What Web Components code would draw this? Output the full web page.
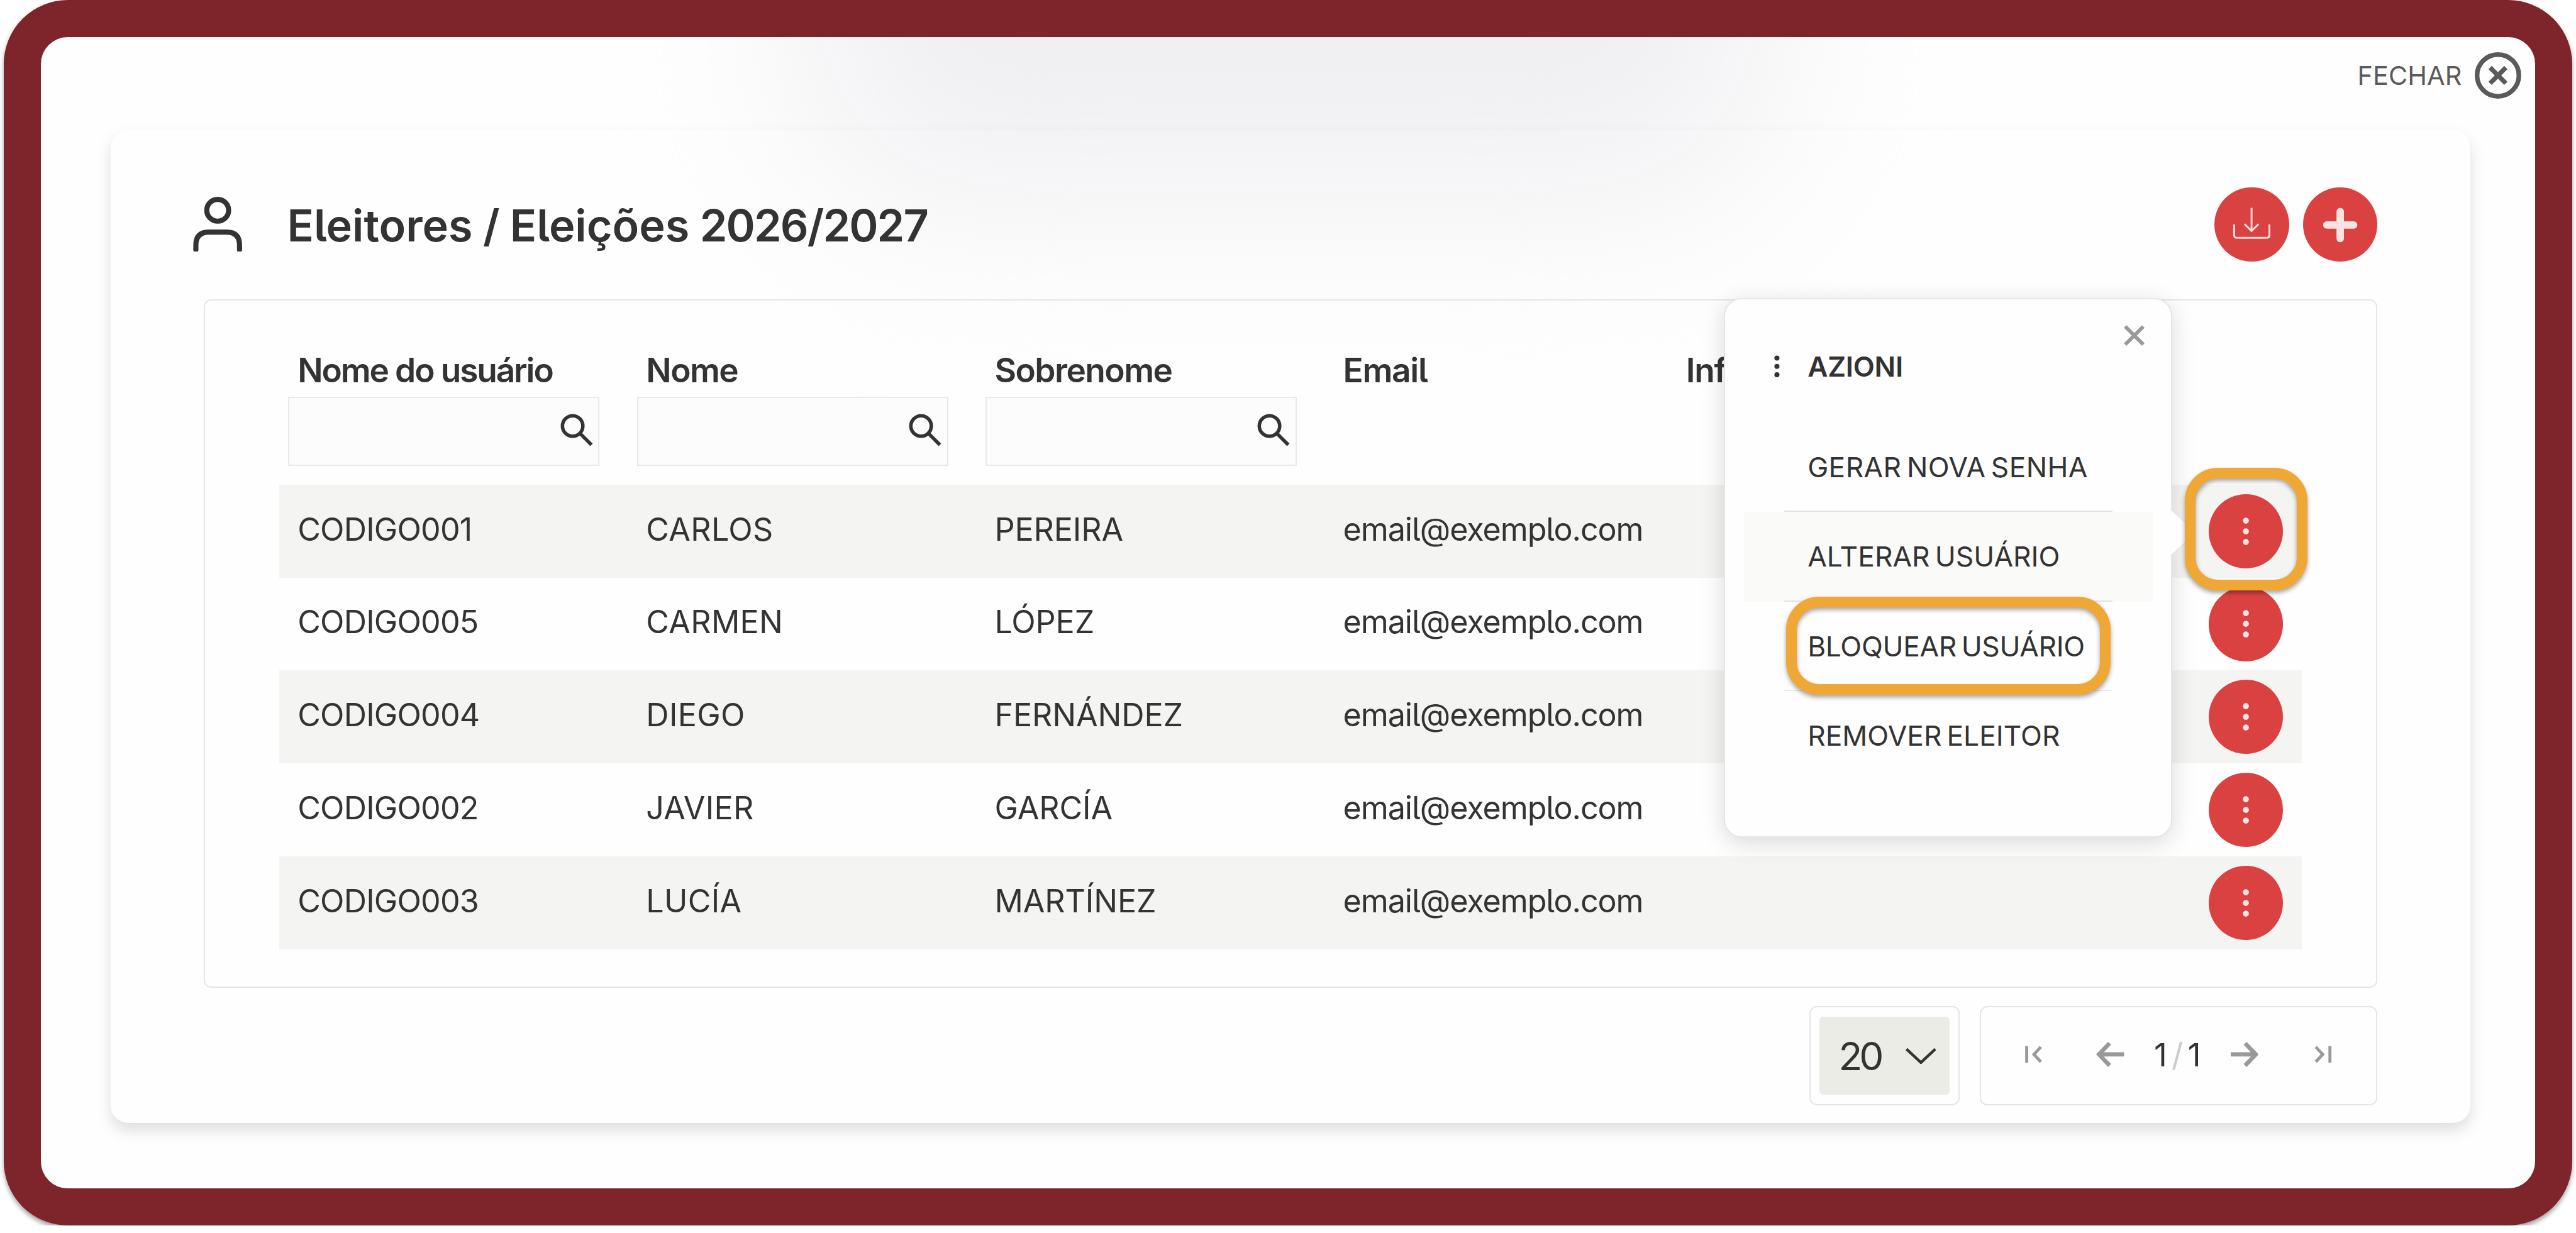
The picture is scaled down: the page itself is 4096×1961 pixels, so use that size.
<!DOCTYPE html>
<html lang="pt">
<head>
<meta charset="utf-8">
<title>Eleitores</title>
<style>
  /* 1rem = 100 design units, the design is 5544 units wide */
  html {
    font-size: calc(100vw / 55.44);
    background: #fff;
  }
  body {
    margin: 0;
    overflow: hidden;
    color: #333;
    font-family: Inter, 'Liberation Sans', Arial, sans-serif;
    font-feature-settings: 'cv05';
  }
</style>
</head>
<body>
<modal-frame>
  <voter-card heading="Eleitores / Eleições" period="2026/2027">
    <voter-table></voter-table>
    <table-pager size="20" page="1" total="1"></table-pager>
  </voter-card>
</modal-frame>

<script>
class BaseElement extends HTMLElement {
  constructor() {
    super();
    this.attachShadow({ mode: 'open' });
  }

  connectedCallback() {
    this.shadowRoot.innerHTML = this.render();
  }
}

class ModalFrame extends BaseElement {
  render() {
    return `
      <style>
        :host {
          display: block;
          box-sizing: border-box;
          position: relative;
          height: 26.38rem;
          margin: 0 0.08rem;
          border: 0.8rem solid #7e242b;
          border-radius: 1.38rem;
          background: #fefefe;
          box-shadow: 0 0.06rem 0.1rem rgba(0,0,0,0.35);
        }
        .glow {
          position: absolute;
          inset: 0;
          overflow: hidden;
          border-radius: 0.58rem;
        }
        .glow::before {
          content: '';
          position: absolute;
          left: 50%;
          top: -5rem;
          width: 20.4rem;
          height: 8.3rem;
          margin-left: -10.2rem;
          border-radius: 2.5rem;
          background: #efeff2;
          filter: blur(1.95rem);
        }
        .close {
          display: flex;
          position: relative;
          align-items: center;
          justify-content: flex-end;
          gap: 0.28rem;
          height: 1.65rem;
          margin-bottom: 0.35rem;
          padding-right: 0.3rem;
          color: #5a5a5a;
          font-size: 0.56rem;
          letter-spacing: 0.002em;
        }
        .close svg {
          width: 1rem;
          height: 1rem;
        }
        ::slotted(*) {
          margin: 0 1.4rem 0 1.5rem;
        }
      </style>
      <div class="glow"></div>
      <div class="close">
        <span>FECHAR</span>
        <svg viewBox="0 0 100 100" fill="none" stroke="#5a5a5a" stroke-width="10">
          <circle cx="50" cy="50" r="45"/>
          <path d="M33 33L67 67M67 33L33 67"/>
        </svg>
      </div>
      <slot></slot>
    `;
  }
}

class RoundButton extends BaseElement {
  static icons = {
    download: '<path d="M80 44V94M65 79L80 94L95 79M42.500 80V103Q42.500 108.500 48 108.500H113Q118.500 108.500 118.500 103V80" fill="none" stroke="#fae0e0" stroke-width="4"/>',
    plus: '<path d="M80 52V110M51 81H109" fill="none" stroke="#fae3e3" stroke-width="16" stroke-linecap="round"/>',
    dots: '<g fill="#fae3e3"><circle cx="80" cy="57" r="6.500"/><circle cx="80" cy="80" r="6.500"/><circle cx="80" cy="103" r="6.500"/></g>'
  };

  render() {
    return `
      <style>
        :host {
          display: block;
          flex: none;
          position: relative;
          width: 1.6rem;
          height: 1.6rem;
          border-radius: 50%;
          background: #da4141;
        }
        svg {
          display: block;
          width: 100%;
          height: 100%;
        }
      </style>
      <svg viewBox="0 0 160 160">${RoundButton.icons[this.getAttribute('icon')]}</svg>
      <slot></slot>
    `;
  }
}

/* outline drawn over its parent, offsets come from --ring-inset */
class FocusRing extends BaseElement {
  render() {
    return `
      <style>
        :host {
          display: block;
          box-sizing: border-box;
          position: absolute;
          inset: var(--ring-inset, 0);
          z-index: 3;
          border: 0.24rem solid #efa835;
          border-radius: 0.71rem;
          filter: drop-shadow(0 0.06rem 0.05rem rgba(0,0,0,0.35));
        }
      </style>
    `;
  }
}

class VoterCard extends BaseElement {
  render() {
    return `
      <style>
        :host {
          display: block;
          box-sizing: border-box;
          position: relative;
          height: 21.38rem;
          padding: 0.42rem 2rem 0 2.01rem;
          border-radius: 0.38rem;
          box-shadow: 0 0.16rem 0.32rem rgba(0,0,0,0.13);
        }
        header {
          display: flex;
          align-items: center;
          height: 3.22rem;
        }
        .user {
          width: 1.06rem;
          height: 1.18rem;
          margin-left: -0.24rem;
        }
        h1 {
          flex: 1;
          margin: 0.06rem 0 0 0.97rem;
          font-size: 0.95rem;
          font-weight: 600;
          word-spacing: -0.02em;
        }
        h1 span {
          letter-spacing: -0.027em;
        }
        .buttons {
          display: flex;
          gap: 0.3rem;
        }
      </style>
      <header>
        <svg class="user" viewBox="0 0 106 118" fill="none" stroke="#333" stroke-width="11">
          <circle cx="53" cy="29" r="23.500"/>
          <path d="M6 114V104Q6 76 34 76H72Q100 76 100 104V114" stroke-linecap="round"/>
        </svg>
        <h1>${this.getAttribute('heading')} <span>${this.getAttribute('period')}</span></h1>
        <div class="buttons">
          <round-button icon="download"></round-button>
          <round-button icon="plus"></round-button>
        </div>
      </header>
      <slot></slot>
    `;
  }
}

class SearchBox extends BaseElement {
  render() {
    return `
      <style>
        :host {
          display: flex;
          box-sizing: border-box;
          align-items: center;
          justify-content: flex-end;
          width: 6.7rem;
          height: 1.5rem;
          margin-left: 0.19rem;
          padding: 0 0.12rem 0.06rem 0;
          border: 0.03rem solid #e9e9e9;
          background: #fcfcfc;
        }
        svg {
          width: 0.7rem;
          height: 0.7rem;
        }
      </style>
      <svg viewBox="0 0 70 70" fill="none" stroke="#333" stroke-width="7.500">
        <circle cx="26.500" cy="26.500" r="22"/>
        <path d="M42.500 42.500L67 67"/>
      </svg>
    `;
  }
}

class VoterTable extends BaseElement {
  columns = [
    { label: 'Nome do usuário', search: true, spacing: -0.04 },
    { label: 'Nome', search: true, spacing: -0.03 },
    { label: 'Sobrenome', search: true, spacing: -0.029 },
    { label: 'Email', spacing: -0.024 },
    { label: 'Inf', spacing: -0.024 }
  ];

  rows = [
    ['CODIGO001', 'CARLOS', 'PEREIRA', 'email@exemplo.com'],
    ['CODIGO005', 'CARMEN', 'LÓPEZ', 'email@exemplo.com'],
    ['CODIGO004', 'DIEGO', 'FERNÁNDEZ', 'email@exemplo.com'],
    ['CODIGO002', 'JAVIER', 'GARCÍA', 'email@exemplo.com'],
    ['CODIGO003', 'LUCÍA', 'MARTÍNEZ', 'email@exemplo.com']
  ];

  render() {
    const head = this.columns.map(c => `
      <div>
        <div class="label" style="letter-spacing:${c.spacing}em">${c.label}</div>
        ${c.search ? '<search-box></search-box>' : ''}
      </div>`).join('');

    const body = this.rows.map((row, i) => `
      <div class="row${i % 2 ? '' : ' shaded'}">
        ${row.map(cell => `<span>${cell}</span>`).join('')}
        <round-button icon="dots">${i === 0 ? '<focus-ring></focus-ring>' : ''}</round-button>
      </div>`).join('');

    return `
      <style>
        :host {
          display: block;
          box-sizing: border-box;
          position: relative;
          height: 14.82rem;
          padding: 0 1.6rem;
          border: 0.03rem solid #e6e6e6;
          border-radius: 0.16rem;
        }
        .head, .row {
          display: grid;
          grid-template-columns: 7.5rem 7.5rem 7.5rem 7.38rem 1fr;
        }
        .head {
          box-sizing: border-box;
          height: 3.97rem;
          padding-top: 0.94rem;
        }
        .label {
          padding-left: 0.39rem;
          line-height: 1.13rem;
          font-size: 0.72rem;
          font-weight: 600;
        }
        .row {
          align-items: center;
          height: 2rem;
          font-size: 0.68rem;
        }
        .row.shaded {
          background: #f4f4f2;
        }
        .row span {
          padding: 0 0 0.1rem 0.39rem;
          letter-spacing: 0.006em;
        }
        .row span:first-child {
          letter-spacing: -0.016em;
        }
        .row span:nth-child(3) {
          letter-spacing: -0.002em;
        }
        .row span:nth-child(4) {
          letter-spacing: -0.021em;
        }
        .row round-button {
          justify-self: end;
          margin-right: 0.4rem;
        }
        focus-ring {
          --ring-inset: -0.56rem -0.53rem -0.47rem -0.51rem;
        }
        action-menu {
          position: absolute;
          left: 32.69rem;
          top: -0.05rem;
          z-index: 2;
        }
      </style>
      <div class="head">${head}</div>
      ${body}
      <action-menu></action-menu>
    `;
  }
}

class ActionMenu extends BaseElement {
  render() {
    return `
      <style>
        :host {
          display: block;
          box-sizing: border-box;
          width: 9.65rem;
          height: 11.61rem;
          padding: 0 0.4rem;
          border: 0.03rem solid #e6e6e6;
          border-radius: 0.38rem;
          background: #fefefe;
          box-shadow: 0 0.12rem 0.5rem rgba(0,0,0,0.14);
          font-size: 0.6rem;
          word-spacing: -0.1em;
        }
        .arrow {
          position: absolute;
          left: 100%;
          top: 4.52rem;
          width: 0.54rem;
          height: 1rem;
        }
        .x {
          position: absolute;
          right: 0.57rem;
          top: 0.56rem;
          width: 0.45rem;
          height: 0.45rem;
        }
        .title {
          display: flex;
          align-items: center;
          height: 1rem;
          padding: 0.95rem 0 0.7rem 0.65rem;
          font-weight: 600;
          letter-spacing: -0.006em;
        }
        .title svg {
          width: 0.12rem;
          height: 0.48rem;
          margin-right: 0.6rem;
        }
        .item {
          position: relative;
          height: 1.93rem;
          padding-left: 1.37rem;
          line-height: 1.94rem;
        }
        .item.active {
          background: #fafaf8;
        }
        .item:not(:last-child)::after {
          content: '';
          position: absolute;
          left: 0.87rem;
          right: 0.87rem;
          bottom: 0;
          height: 0.025rem;
          background: #e3e3e3;
        }
        focus-ring {
          --ring-inset: -0.11rem 0.9rem -0.08rem 0.91rem;
        }
      </style>
      <svg class="arrow" viewBox="0 0 54 100">
        <path d="M0 1L54 50L0 99" fill="#fefefe" stroke="#e9e9e9" stroke-width="2"/>
      </svg>
      <svg class="x" viewBox="0 0 45 45" fill="none" stroke="#999" stroke-width="8">
        <path d="M3 3L42 42M42 3L3 42"/>
      </svg>
      <div class="title">
        <svg viewBox="0 0 12 48" fill="#333">
          <circle cx="6" cy="6" r="5.500"/><circle cx="6" cy="24" r="5.500"/><circle cx="6" cy="42" r="5.500"/>
        </svg>
        AZIONI
      </div>
      <div class="item" style="letter-spacing:0.009em">GERAR NOVA SENHA</div>
      <div class="item active" style="letter-spacing:0.001em">ALTERAR USUÁRIO</div>
      <div class="item" style="letter-spacing:-0.007em">BLOQUEAR USUÁRIO<focus-ring></focus-ring></div>
      <div class="item">REMOVER ELEITOR</div>
    `;
  }
}

class TablePager extends BaseElement {
  render() {
    return `
      <style>
        :host {
          display: flex;
          justify-content: flex-end;
          gap: 0.42rem;
          padding-top: 0.405rem;
        }
        .size, .pages {
          display: flex;
          box-sizing: border-box;
          align-items: center;
          height: 2.13rem;
          border: 0.03rem solid #e6e6e6;
          border-radius: 0.16rem;
        }
        .size {
          width: 3.24rem;
          padding: 0 0.19rem;
        }
        .select {
          display: flex;
          box-sizing: border-box;
          flex: 1;
          align-items: center;
          justify-content: space-between;
          height: 1.67rem;
          padding: 0 0.3rem 0 0.41rem;
          border-radius: 0.08rem;
          background: #ebece6;
          font-size: 0.84rem;
          letter-spacing: -0.08em;
        }
        .select svg {
          width: 0.66rem;
          height: 0.34rem;
        }
        .pages {
          width: 8.56rem;
          padding: 0 0.95rem 0.05rem 0.96rem;
          font-size: 0.69rem;
        }
        .pages svg {
          height: 0.54rem;
          fill: none;
          stroke: #999;
        }
        .edge {
          width: 0.37rem;
        }
        .arrow {
          width: 0.6rem;
        }
        .prev {
          margin-left: 1.16rem;
        }
        .next {
          margin-right: 1.21rem;
        }
        .count {
          display: flex;
          flex: 1;
          justify-content: center;
          gap: 0.1rem;
        }
        .count i {
          color: #ccc;
          font-style: normal;
        }
      </style>
      <div class="size">
        <div class="select">
          ${this.getAttribute('size')}
          <svg viewBox="0 0 66 34" fill="none" stroke="#333" stroke-width="6"><path d="M2 2L33 31L64 2"/></svg>
        </div>
      </div>
      <div class="pages">
        <svg class="edge" viewBox="0 0 37 54" stroke-width="6.500"><path d="M3.500 9V45M34 11L19 27L34 43"/></svg>
        <svg class="arrow prev" viewBox="0 0 60 54" stroke-width="9"><path d="M60 27H7M29 3L6 27L29 51"/></svg>
        <div class="count"><span>${this.getAttribute('page')}</span><i>/</i><span>${this.getAttribute('total')}</span></div>
        <svg class="arrow next" viewBox="0 0 60 54" stroke-width="9"><path d="M0 27H53M31 3L54 27L31 51"/></svg>
        <svg class="edge" viewBox="0 0 37 54" stroke-width="6.500"><path d="M33.500 9V45M3 11L18 27L3 43"/></svg>
      </div>
    `;
  }
}

customElements.define('round-button', RoundButton);
customElements.define('focus-ring', FocusRing);
customElements.define('search-box', SearchBox);
customElements.define('action-menu', ActionMenu);
customElements.define('voter-table', VoterTable);
customElements.define('table-pager', TablePager);
customElements.define('voter-card', VoterCard);
customElements.define('modal-frame', ModalFrame);
</script>
</body>
</html>
